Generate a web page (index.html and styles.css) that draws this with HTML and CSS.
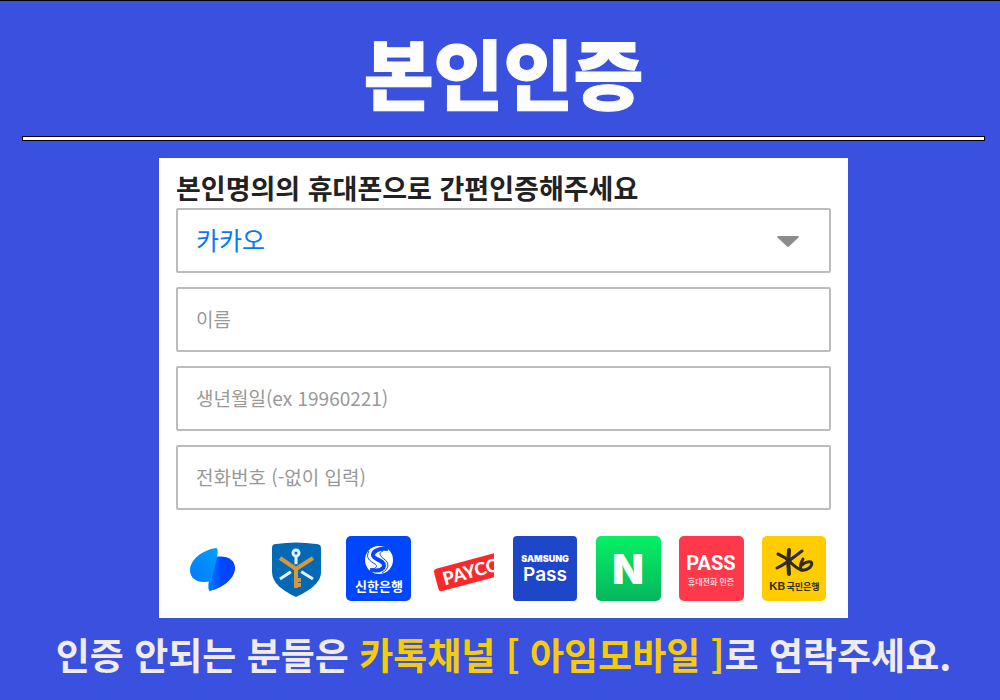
FILE: index.html
```html
<!DOCTYPE html>
<html lang="ko">
<head>
  <meta charset="UTF-8">
  <meta name="viewport" content="width=device-width, initial-scale=1.0">
  <title>본인인증</title>
  <link rel="stylesheet" href="styles.css">
</head>
<body>
  <header class="header">
    <h1>본인인증</h1>
  </header>

  <main class="panel">
    <h2>본인명의의 휴대폰으로 간편인증해주세요</h2>

    <form class="form">
      <div class="select-box">
        <select class="field" aria-label="인증 수단">
          <option>카카오</option>
        </select>
        <svg class="arrow" viewBox="0 0 22 11" aria-hidden="true">
          <path d="M1 0H21Q22.500 .5 21.300 1.800L12.200 10.300Q11 11.300 9.800 10.300L.7 1.800Q-.5 .5 1 0Z"/>
        </svg>
      </div>
      <input class="field" type="text" placeholder="이름" aria-label="이름">
      <input class="field" type="text" placeholder="생년월일(ex 19960221)" aria-label="생년월일">
      <input class="field" type="tel" placeholder="전화번호 (-없이 입력)" aria-label="전화번호">

      <!-- Providers -->
      <div class="providers">
        <button type="button" aria-label="토스">
          <svg viewBox="0 0 65 65">
            <defs>
              <linearGradient id="toss-left" x1="0" y1="1" x2="1" y2="0">
                <stop offset="0" stop-color="#0078ff"/>
                <stop offset="1" stop-color="#00a0ff"/>
              </linearGradient>
              <linearGradient id="toss-right" x1="0" y1="0" x2="1" y2="0">
                <stop offset="0" stop-color="#0080ff"/>
                <stop offset=".5" stop-color="#0048ff"/>
                <stop offset="1" stop-color="#0040ff"/>
              </linearGradient>
            </defs>
            <path fill="url(#toss-right)" d="M36 21C47 19 55 24 55 32C55 42 43 52 30 55C28 55 28 50 29 44Z"/>
            <path fill="url(#toss-left)" d="M36 12C38 12 38 16 37 22C35 30 33 38 31 45C20 48 10 44 10 34C10 24 22 14 36 12Z"/>
          </svg>
        </button>
        <button type="button" aria-label="금융인증서">
          <svg viewBox="0 0 65 65">
            <path fill="#0369b4" d="M9 12Q9 8 13 8Q33 5 53 8Q58 8 58 12V36C58 47 46 55 33 61C20 55 9 47 9 36Z"/>
            <g fill="none" stroke="#e2f3ff" stroke-width="3">
              <circle cx="33" cy="17" r="3"/>
              <path d="M33 20V33M32 33L17 43M34 33L50 43"/>
            </g>
            <path fill="none" stroke="#0369b4" stroke-width="9" d="M28 36L33 33L38 36"/>
            <path fill="none" stroke="#d5973c" stroke-width="4" d="M17 22L33 33L50 22M33 31V52M34 44H38M34 49H38"/>
          </svg>
        </button>
        <button type="button" aria-label="신한은행">
          <svg viewBox="0 0 65 65">
            <rect width="65" height="65" rx="5" fill="#0046ff"/>
            <circle cx="33" cy="24" r="14" fill="#fff"/>
            <path fill="none" stroke="#0046ff" stroke-width="4" d="M42 13C33 12 27 15 27 19C27 24 39 24 38 30C37 35 31 35 24 34"/>
            <path fill="none" stroke="#0046ff" stroke-width="1" d="M37 15C32 17 34 20 38 23C44 27 43 33 36 37M23 15C19 22 24 25 29 28C32 30 30 32 27 33"/>
            <text class="logo-ko" x="33" y="55" font-size="13" fill="#fff">신한은행</text>
          </svg>
        </button>
        <button type="button" aria-label="페이코">
          <svg viewBox="0 0 65 65">
            <g transform="rotate(-15 7 36)">
              <rect x="5" y="33" width="75" height="23" rx="3" fill="#fa2828"/>
              <text class="logo-payco" x="12" y="51" font-size="18" fill="#fff">PAYCO</text>
            </g>
          </svg>
        </button>
        <button type="button" aria-label="삼성패스">
          <svg viewBox="0 0 65 65">
            <rect width="64" height="65" rx="4" fill="#1e46c8"/>
            <text class="logo-samsung" x="32" y="26" font-size="9" fill="#fff">SAMSUNG</text>
            <text class="logo-pass" x="32" y="45" font-size="19" fill="#fff">Pass</text>
          </svg>
        </button>
        <button type="button" aria-label="네이버">
          <svg viewBox="0 0 65 65">
            <defs>
              <linearGradient id="naver" x1="0" y1="0" x2="0" y2="1">
                <stop offset="0" stop-color="#06f065"/>
                <stop offset="1" stop-color="#06b65d"/>
              </linearGradient>
            </defs>
            <rect width="65" height="65" rx="5" fill="url(#naver)"/>
            <text class="logo-naver" x="32" y="48" font-size="41" fill="#fff">N</text>
          </svg>
        </button>
        <button type="button" aria-label="PASS 휴대전화 인증">
          <svg viewBox="0 0 65 65">
            <rect width="65" height="65" rx="5" fill="#ff384b"/>
            <text class="logo-tel" x="32" y="34" font-size="20" fill="#fff">PASS</text>
            <text class="logo-ko" x="32" y="49" font-size="8" fill="#ffd5d9">휴대전화 인증</text>
          </svg>
        </button>
        <button type="button" aria-label="KB국민은행">
          <svg viewBox="0 0 65 65">
            <rect width="64" height="65" rx="5" fill="#ffcc00"/>
            <g fill="none" stroke="#302b20" stroke-linecap="round" stroke-linejoin="round">
              <path stroke-width="4" d="M27 14C26 22 26 30 27 38"/>
              <path stroke-width="3" d="M16 18C21 20 25 23 28 26M41 23C38 28 38 31 39 34C46 35 52 29 49 26C46 25 42 27 40 29"/>
              <path stroke-width="3" d="M40 15C33 20 24 28 15 32M27 25C31 29 35 33 40 34"/>
            </g>
            <text class="logo-kb" x="7" y="54" font-size="12" fill="#302b20">KB</text>
            <text class="logo-ko" x="41" y="54" font-size="9" fill="#302b20">국민은행</text>
          </svg>
        </button>
      </div>
    </form>
  </main>

  <footer class="footer">
    <p>인증 안되는 분들은 <strong>카톡채널 [ 아임모바일 ]</strong>로 연락주세요.</p>
  </footer>
</body>
</html>
```

FILE: styles.css
```css
* {
  box-sizing: border-box;
}

body {
  margin: 0;
  padding: 0 15px 0 22px;
  min-height: 100vh;
  display: flex;
  flex-direction: column;
  align-items: center;
  border-top: 1px solid #000;
  background: #3a50de;
  font-family: "Noto Sans CJK KR", sans-serif;
}

h1, h2, p {
  margin: 0;
}

.header {
  width: 100%;
  padding-top: 23px;
  text-align: center;
}

.header::after {
  content: "";
  display: block;
  height: 3px;
  border: 1px solid #000;
  background: #fff;
}

h1 {
  height: 112px;
  font-size: 76px;
  font-weight: 900;
  line-height: 94px;
  color: #fdfdfd;
  -webkit-text-stroke: 1px #fdfdfd;
}

.panel {
  width: 100%;
  max-width: 689px;
  margin-top: 17px;
  padding: 10px 17px 17px;
  background: #fff;
}

h2 {
  font-size: 27px;
  font-weight: 700;
  line-height: 40px;
  color: #222;
}

.form {
  display: flex;
  flex-direction: column;
  gap: 14px;
}

.field {
  width: 100%;
  height: 65px;
  padding: 0 18px 2px;
  border: 2px solid #bcbcbc;
  border-radius: 2px;
  background: #fff;
  font-family: inherit;
  font-size: 19px;
  color: #222;
}

.field::placeholder {
  color: #999;
  opacity: 1;
}

.select-box {
  display: grid;
  align-items: center;
}

.select-box .field,
.arrow {
  grid-area: 1 / 1;
}

.select-box .field {
  appearance: none;
  padding-bottom: 4px;
  font-size: 25px;
  color: #0a78f5;
}

.arrow {
  width: 22px;
  justify-self: end;
  margin: 2px 32px 0 0;
  fill: #8c8c8c;
  pointer-events: none;
}

.providers {
  display: flex;
  justify-content: space-between;
  padding: 12px 4px 0;
}

.providers button {
  width: 65px;
  padding: 0;
  border: none;
  background: none;
  cursor: pointer;
}

.providers svg {
  display: block;
  width: 100%;
}

.logo-ko,
.logo-samsung,
.logo-pass,
.logo-naver,
.logo-tel {
  text-anchor: middle;
}

.logo-ko {
  font-family: "Noto Sans CJK KR", sans-serif;
  font-weight: 700;
}

.logo-payco {
  font-family: Lato, sans-serif;
  font-weight: 900;
}

.logo-samsung,
.logo-naver {
  font-family: Inter, sans-serif;
  font-weight: 900;
}

.logo-pass {
  font-family: Inter, sans-serif;
  font-weight: 600;
}

.logo-tel {
  font-family: Roboto, sans-serif;
  font-weight: 700;
}

.logo-kb {
  font-family: Lato, sans-serif;
  font-weight: 700;
}

.footer {
  padding: 9px 0 16px;
  font-size: 37px;
  font-weight: 700;
  line-height: 54px;
  text-align: center;
  color: #f0ebed;
}

.footer strong {
  font-weight: 700;
  color: #f5cb0c;
}
```
